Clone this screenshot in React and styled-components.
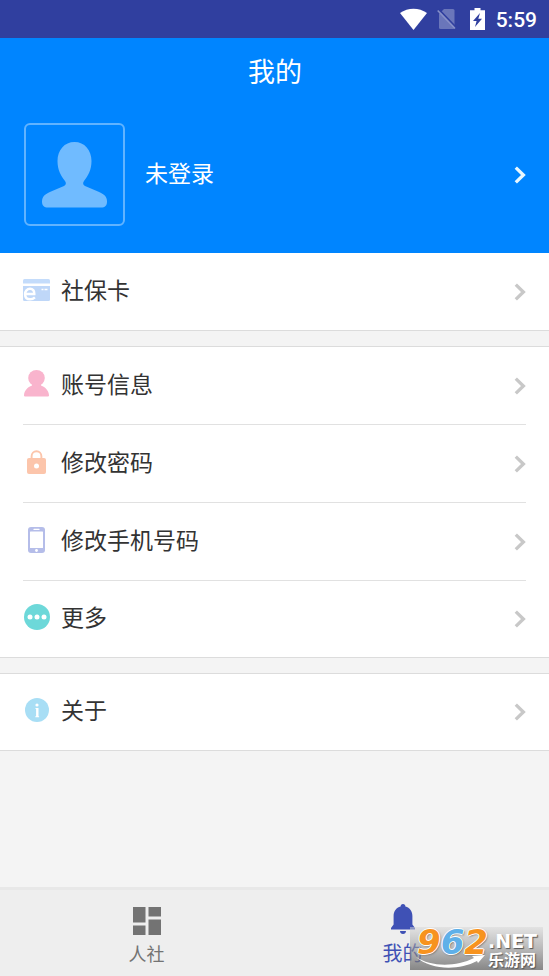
import React from "react";
import styled, { createGlobalStyle } from "styled-components";

const GlobalStyle = createGlobalStyle`
  * {
    box-sizing: border-box;
  }

  body {
    margin: 0;
    background: #f4f4f4;
    font-family: Roboto, "Noto Sans CJK SC", sans-serif;
  }

  button {
    font: inherit;
    border: 0;
    padding: 0;
    background: none;
    cursor: pointer;
  }

  svg {
    display: block;
    flex: none;
  }
`;

const Page = styled.div`
  display: flex;
  flex-direction: column;
  min-height: 100vh;
`;

const StatusBar = styled.div`
  display: flex;
  align-items: center;
  justify-content: flex-end;
  height: 38px;
  padding-right: 12px;
  background: #303f9f;
  color: #fff;
`;

const Clock = styled.span`
  margin-left: 11px;
  font-size: 21px;
  font-weight: 500;
  line-height: 24px;
  padding-top: 2px;
`;

const StatusIcon = styled.svg`
  margin-left: ${props => props.$gap}px;
`;

const Header = styled.header`
  height: 215px;
  padding: 2px 23px 0 24px;
  background: #0085ff;
  color: #fff;
`;

const Title = styled.h1`
  margin: 0;
  font-size: 27px;
  font-weight: 400;
  line-height: 66px;
  text-align: center;
`;

const Profile = styled.button`
  display: flex;
  align-items: center;
  width: 100%;
  margin-top: 17px;
  color: #fff;
`;

const Avatar = styled.span`
  display: flex;
  align-items: center;
  justify-content: center;
  width: 101px;
  height: 103px;
  margin-right: 20px;
  border: 2px solid #61b3ff;
  border-radius: 6px;
`;

const Label = styled.span`
  flex: 1;
  font-size: 23px;
  line-height: 30px;
  text-align: left;
`;

const Group = styled.ul`
  list-style: none;
  margin: 0 0 15px;
  padding: 0 23px;
  background: #fff;
  border-bottom: 1px solid #dcdcdc;

  & + & {
    border-top: 1px solid #dcdcdc;
  }
`;

const Item = styled.li`
  & + & {
    border-top: 1px solid #e1e1e1;
  }
`;

const Row = styled.button`
  display: flex;
  align-items: center;
  width: 100%;
  height: 77px;
  color: #333;

  ${Group} + ${Group} ${Item}:last-child & {
    height: 76px;
  }
`;

const RowIcon = styled.span`
  display: flex;
  justify-content: center;
  width: 27px;
  margin-right: 11px;
  padding-bottom: 4px;
`;

const Nav = styled.nav`
  display: flex;
  justify-content: center;
  height: 89px;
  margin-top: auto;
  background: #eee;
  border-top: 3px solid #e8e8e8;
`;

const Tab = styled.button`
  display: flex;
  flex-direction: column;
  align-items: center;
  flex: 0 1 256px;
  padding-top: ${props => (props.$active ? 14 : 17)}px;
  color: ${props => (props.$active ? "#3f51b5" : "#737373")};
  font-size: ${props => (props.$active ? 20 : 18)}px;
  line-height: 30px;
`;

const TabLabel = styled.span`
  margin-top: 5px;
`;

const Watermark = styled.div`
  position: absolute;
  right: 6px;
  bottom: 6px;
  display: flex;
  width: 133px;
  height: 43px;
  padding-left: 7px;
  background: linear-gradient(
    rgba(215, 215, 215, 0.5),
    rgba(150, 150, 150, 0.6) 50%,
    rgba(100, 100, 100, 0.75)
  );
`;

const Digits = styled.span`
  height: 30px;
  font: italic bold 34px/30px "DejaVu Sans", sans-serif;
  color: ${props => props.$color};
  text-shadow: 1px 0 #fff, -1px 0 #fff, 0 1px #fff, 0 -1px #fff,
    1px 1px 2px #555;
`;

const Site = styled.div`
  display: flex;
  flex-direction: column;
  color: #fff;
  text-shadow: 1px 1px 1px #555;
`;

const Domain = styled.span`
  margin-top: 3px;
  font: bold 19px/22px "DejaVu Sans", sans-serif;
`;

const SiteName = styled.span`
  font-size: 16px;
  font-weight: 700;
  line-height: 18px;
`;

const Swoosh = styled.svg`
  position: absolute;
  left: 6px;
  bottom: 1px;
`;

const Chevron = ({ color }) => (
  <svg width="12" height="18" viewBox="0 0 12 18">
    <path d="M1.8 1.6 9.4 9l-7.6 7.4" fill="none" stroke={color} strokeWidth="3.3" />
  </svg>
);

const CardIcon = () => (
  <svg width="27" height="22" viewBox="0 0 27 22">
    <path d="M0 4.5V1.500Q0 0 1.500 0h24Q27 0 27 1.500v3z" fill="#c4dcfb" />
    <path d="M0 7h27v13.500q0 1.500-1.500 1.500h-24Q0 22 0 20.500z" fill="#bfd7f8" />
    <path
      d="M2 15h9.300c.2-3.300-1.600-5.200-4.300-5.200-2.900 0-4.900 2.200-4.900 5.400 0 3.100 1.900 5.100 5 5.100 1.900 0 3.500-.7 4.800-1.900"
      fill="none"
      stroke="#fff"
      strokeWidth="2.500"
    />
    <path d="M18.500 10.500h2M21.500 10.500h3" stroke="#fff" strokeWidth="1.700" />
  </svg>
);

const PersonIcon = () => (
  <svg width="25" height="27" viewBox="0 0 25 27" fill="#f9b4cd">
    <ellipse cx="12.500" cy="8" rx="8.300" ry="8" />
    <path d="M8 13h9v2.500c4.500 1.600 7.500 5 8 9.500.1 1-.4 1.600-1.400 1.600H1.400C.4 26.600-.1 26 0 25c.500-4.500 3.500-7.900 8-9.500z" />
  </svg>
);

const LockIcon = () => (
  <svg width="19" height="24" viewBox="0 0 19 24">
    <path d="M4.600 9V6.300a4.900 5 0 0 1 9.800 0V9" fill="none" stroke="#fcc5ab" strokeWidth="1.900" />
    <rect y="8" width="19" height="16" rx="2" fill="#fcc5ab" />
    <circle cx="9.500" cy="16" r="2.500" fill="#fff" />
  </svg>
);

const PhoneIcon = () => (
  <svg width="17" height="26" viewBox="0 0 17 26">
    <rect width="17" height="26" rx="3" fill="#b5bde9" />
    <rect x="2" y="4.500" width="13" height="16.500" rx="0.500" fill="#fff" />
    <path d="M6 2.400h5" stroke="#fff" strokeWidth="1.200" strokeLinecap="round" />
    <circle cx="8.500" cy="23.500" r="1.400" fill="#fff" />
  </svg>
);

const MoreIcon = () => (
  <svg width="26" height="26" viewBox="0 0 26 26">
    <circle cx="13" cy="13" r="13" fill="#6dd8d9" />
    <g fill="#fff">
      <circle cx="6" cy="13" r="2.500" />
      <circle cx="13" cy="13" r="2.500" />
      <circle cx="20" cy="13" r="2.500" />
    </g>
  </svg>
);

const InfoIcon = () => (
  <svg width="24" height="24" viewBox="0 0 24 24">
    <circle cx="12" cy="12" r="12" fill="#a8def5" />
    <circle cx="12" cy="7" r="1.600" fill="#fff" />
    <path d="M10.500 10h3v8.200h.6v1h-3.800v-1h.8V11h-.6z" fill="#fff" />
  </svg>
);

const groups = [
  [{ label: "社保卡", Icon: CardIcon }],
  [
    { label: "账号信息", Icon: PersonIcon },
    { label: "修改密码", Icon: LockIcon },
    { label: "修改手机号码", Icon: PhoneIcon },
    { label: "更多", Icon: MoreIcon }
  ],
  [{ label: "关于", Icon: InfoIcon }]
];

function App() {
  return (
    <Page>
      <GlobalStyle />
      <StatusBar>
        <StatusIcon $gap={0} width="27" height="22" viewBox="0 0 27 22">
          <path d="M0 5C8-.8 19-.8 27 5L13.500 22z" fill="#fff" />
        </StatusIcon>
        <StatusIcon $gap={10} width="19" height="22" viewBox="0 0 19 22">
          <path d="M7 1h9q1.500 0 1.500 1.500v17q0 1.500-1.500 1.500H3.500Q2 21 2 19.500V6z" fill="#6a76ba" />
          <path d="M1.500 1 19 19.200" stroke="#303f9f" strokeWidth="1.800" />
          <path d="M.7 2.500 18 20.500" stroke="#8790c8" strokeWidth="1.600" />
        </StatusIcon>
        <StatusIcon $gap={14} width="15" height="22" viewBox="0 0 15 22">
          <path d="M4.500 0h6v2.200H15V22H0V2.200h4.500z" fill="#fff" />
          <path d="M10 5 3 13h3.600l-1.600 6 7-8.200H8.300z" fill="#303f9f" />
        </StatusIcon>
        <Clock>5:59</Clock>
      </StatusBar>

      <Header>
        <Title>我的</Title>
        <Profile type="button">
          <Avatar>
            <svg width="65" height="66" viewBox="0 0 65 66">
              <path
                d="M32.500 0C42.500 0 49.500 8 49.500 19c0 9-3.500 15-7.500 20-1.500 2-1 4 1 5l13 5.500c6 2.500 9 5 9 10 0 4-2 6-6 6H6c-4 0-6-2-6-6 0-5 3-7.500 9-10L22 44c2-1 2.500-3 1-5-4-5-7.500-11-7.500-20C15.500 8 22.500 0 32.500 0z"
                fill="#70bbff"
              />
            </svg>
          </Avatar>
          <Label>未登录</Label>
          <Chevron color="#e8f8ff" />
        </Profile>
      </Header>

      <main>
        {groups.map((items, i) => (
          <Group key={i}>
            {items.map(({ label, Icon }) => (
              <Item key={label}>
                <Row type="button">
                  <RowIcon>
                    <Icon />
                  </RowIcon>
                  <Label>{label}</Label>
                  <Chevron color="#c8c8c8" />
                </Row>
              </Item>
            ))}
          </Group>
        ))}
      </main>

      <Nav>
        <Tab type="button">
          <svg width="28" height="28" viewBox="0 0 28 28" fill="#737373">
            <path d="M0 0h12.500v15.500H0zM15.500 0H28v9.500H15.500zM0 18.500h12.500V28H0zM15.500 12.500H28V28H15.500z" />
          </svg>
          <TabLabel>人社</TabLabel>
        </Tab>
        <Tab type="button" $active>
          <svg width="24" height="30" viewBox="0 0 24 30" fill="#3f51b5">
            <path d="M12 0c1.500 0 2.400 1 2.400 2.500 4.500 1.200 7 5 7 9.500v8.500L24 24v1.500H0V24l2.600-3.500V12c0-4.500 2.500-8.300 7-9.500C9.600 1 10.500 0 12 0zM9 27h6c0 1.800-1.300 3-3 3s-3-1.200-3-3z" />
          </svg>
          <TabLabel>我的</TabLabel>
        </Tab>
      </Nav>

      <Watermark>
        <Digits $color="#f7931e">9</Digits>
        <Digits $color="#5fb0e8">6</Digits>
        <Digits $color="#f7931e">2</Digits>
        <Site>
          <Domain>.NET</Domain>
          <SiteName>乐游网</SiteName>
        </Site>
        <Swoosh width="70" height="14" viewBox="0 0 70 14">
          <path d="M0 2c15 10 40 10 58 1l-2-2L69 0l-7 8-1-2C42 16 15 15 0 2z" fill="#fff" />
        </Swoosh>
      </Watermark>
    </Page>
  );
}

export default App;
